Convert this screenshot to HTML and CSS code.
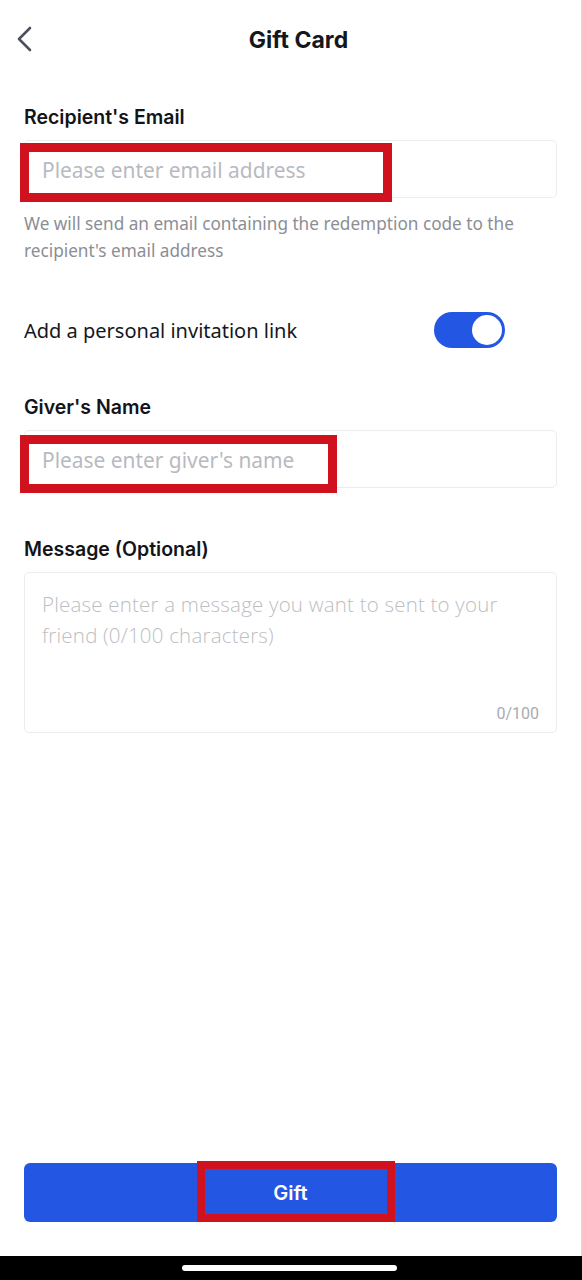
FILE: index.html
```html
<html>
    <head>
        <title>Gift Card</title>
        <meta charset="UTF-8">
        <meta name="viewport" content="width=device-width, initial-scale=1.0">
        <link rel="stylesheet" href="styles.css">
    </head>
    <body>
        <div class="page">
            <div class="header">
                <svg class="back" width="16" height="26" viewBox="0 0 16 26">
                    <polyline points="13,2 2,13 13,24" fill="none" stroke="#4b505b" stroke-width="2.6" stroke-linecap="round" stroke-linejoin="round"/>
                </svg>
                <div class="title">Gift Card</div>
            </div>

            <div class="form">
                <div class="label">Recipient's Email</div>
                <div class="field">
                    <div class="input">Please enter email address</div>
                    <div class="mark mark-email"></div>
                </div>
                <div class="help">We will send an email containing the redemption code to the recipient's email address</div>

                <div class="row">
                    <span class="row-text">Add a personal invitation link</span>
                    <div class="toggle"><div class="knob"></div></div>
                </div>

                <div class="label label-giver">Giver's Name</div>
                <div class="field">
                    <div class="input">Please enter giver's name</div>
                    <div class="mark mark-giver"></div>
                </div>

                <div class="label label-msg">Message (Optional)</div>
                <div class="textarea">
                    <div class="area-text">Please enter a message you want to sent to your friend (0/100 characters)</div>
                    <div class="count">0/100</div>
                </div>
            </div>

            <div class="footer">
                <div class="field">
                    <div class="button">Gift</div>
                    <div class="mark mark-gift"></div>
                </div>
            </div>

            <div class="navbar"><div class="home"></div></div>
        </div>
    </body>
</html>
```

FILE: styles.css
```css
body{
    margin: 0px;
    background-color: white;
    font-family: "Noto Sans", "Open Sans", sans-serif;
}

.page{
    width: 581px;
    height: 1280px;
    border-right: 1px solid #d9d9d9;
    display: flex;
    flex-direction: column;
}

.header{
    height: 80px;
    display: flex;
    align-items: center;
    justify-content: center;
    position: relative;
}

.back{
    position: absolute;
    left: 17px;
    top: 26px;
}

.title{
    font-family: "Inter", sans-serif;
    font-size: 23px;
    font-weight: 700;
    color: #15171c;
    margin-left: 16px;
}

.form{
    padding: 0px 24px;
}

.label{
    margin-top: 24px;
    height: 26px;
    line-height: 26px;
    font-family: "Inter", sans-serif;
    font-size: 19.5px;
    font-weight: 600;
    color: #121419;
}

.label-giver{
    margin-top: 46px;
}

.label-msg{
    margin-top: 48px;
}

.field{
    position: relative;
    margin-top: 10px;
}

.input{
    height: 58px;
    box-sizing: border-box;
    border: 1px solid #ececee;
    border-radius: 5px;
    padding-left: 17px;
    line-height: 58px;
    font-size: 20.9px;
    color: #b7bac1;
}

.mark{
    position: absolute;
    box-sizing: border-box;
    border: 9px solid #d0121f;
}

.mark-email{
    left: -4px;
    top: 3px;
    width: 372px;
    height: 59px;
}

.mark-giver{
    left: -4px;
    top: 5px;
    width: 317px;
    height: 58px;
}

.help{
    margin-top: 12px;
    font-size: 17.2px;
    line-height: 27px;
    color: #8b8e94;
}

.row{
    margin-top: 48px;
    height: 36px;
    display: flex;
    align-items: center;
    justify-content: space-between;
    padding-right: 52px;
}

.row-text{
    font-size: 20px;
    color: #15171c;
}

.toggle{
    width: 71px;
    height: 36px;
    box-sizing: border-box;
    border-radius: 18px;
    background-color: #2356e3;
    padding: 3px;
    display: flex;
    justify-content: flex-end;
}

.knob{
    width: 30px;
    height: 30px;
    border-radius: 50%;
    background-color: white;
}

.textarea{
    margin-top: 10px;
    height: 161px;
    box-sizing: border-box;
    border: 1px solid #ececee;
    border-radius: 5px;
    padding: 16px 17px 0px 17px;
    display: flex;
    flex-direction: column;
}

.area-text{
    font-family: "Open Sans", "Noto Sans", sans-serif;
    font-size: 20.5px;
    font-weight: 300;
    letter-spacing: 0.2px;
    line-height: 31px;
    color: #bdbec2;
    padding-right: 20px;
}

.count{
    margin-top: auto;
    margin-bottom: 9px;
    text-align: right;
    font-family: "Roboto", sans-serif;
    font-size: 16px;
    color: #a9abb0;
}

.footer{
    margin-top: auto;
    padding: 0px 24px;
}

.button{
    height: 59px;
    border-radius: 6px;
    background-color: #2356e3;
    color: white;
    font-family: "Inter", sans-serif;
    font-size: 20px;
    font-weight: 600;
    line-height: 61px;
    text-align: center;
}

.mark-gift{
    left: 173px;
    top: -2px;
    width: 198px;
    height: 61px;
    border-width: 8px;
}

.footer .field{
    margin-top: 0px;
    margin-bottom: 34px;
}

.navbar{
    height: 24px;
    background-color: black;
    margin-right: -1px;
    display: flex;
    justify-content: center;
    padding-top: 9px;
    box-sizing: border-box;
}

.home{
    width: 215px;
    height: 6px;
    border-radius: 3px;
    background-color: white;
    margin-left: -4px;
}
```
